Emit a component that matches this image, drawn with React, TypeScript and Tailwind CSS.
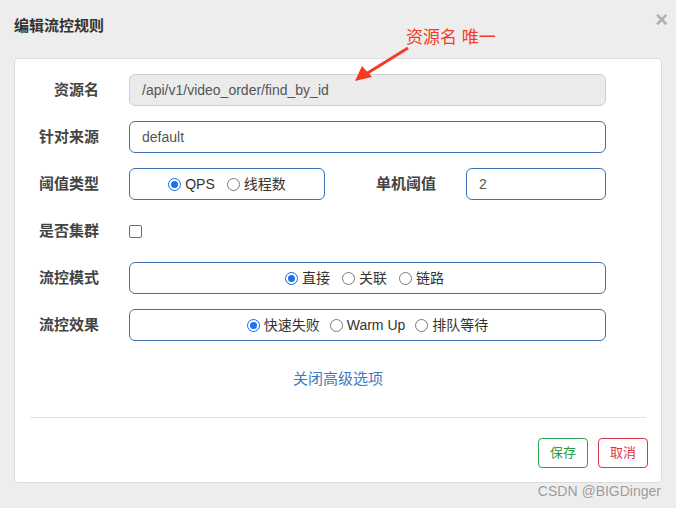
import React from "react";

const font = { fontFamily: '"Liberation Sans", "Noto Sans CJK SC", sans-serif' };

function Radio({ checked, label }: { checked?: boolean; label: string }) {
  return (
    <label className="flex items-center gap-[4px] text-[14px] text-[#333]">
      {checked ? (
        <span className="flex h-[13px] w-[13px] items-center justify-center rounded-full border border-[#1468e5] bg-white p-[2px]">
          <span className="h-full w-full rounded-full bg-[#1a73f0]" />
        </span>
      ) : (
        <span className="h-[13px] w-[13px] rounded-full border border-[#7a7a7a] bg-white" />
      )}
      <span>{label}</span>
    </label>
  );
}

function Row({ label, children }: { label: string; children: React.ReactNode }) {
  return (
    <div className="flex h-[32px] items-center">
      <div className="w-[84px] shrink-0 text-right text-[15px] font-bold text-[#444]">{label}</div>
      <div className="ml-[30px] flex flex-1 items-center">{children}</div>
    </div>
  );
}

export default function App() {
  return (
    <div className="relative h-[508px] w-[676px] overflow-hidden bg-[#ededed]" style={font}>
      <div className="flex h-[58px] items-start justify-between px-[14px] pt-[15px]">
        <h2 className="text-[15px] font-bold text-[#333]">编辑流控规则</h2>
        <span className="mr-[-6px] mt-[-6px] text-[22px] font-bold leading-none text-[#b0b0b0]">×</span>
      </div>

      <div className="mx-[14px] flex h-[425px] flex-col rounded-[4px] border border-[#dcdcdc] bg-white">
        <div className="flex flex-col gap-[15px] pt-[15px] pr-[55px]">
          <Row label="资源名">
            <div className="flex h-[32px] w-full items-center rounded-[6px] border border-[#cfcfcf] bg-[#ebebeb] px-[12px] text-[14px] text-[#555]">
              /api/v1/video_order/find_by_id
            </div>
          </Row>
          <Row label="针对来源">
            <div className="flex h-[32px] w-full items-center rounded-[6px] border border-[#3b73b0] px-[12px] text-[14px] text-[#555]">
              default
            </div>
          </Row>
          <Row label="阈值类型">
            <div className="flex h-[32px] w-[196px] items-center justify-center gap-[12px] rounded-[6px] border border-[#3b73b0]">
              <Radio checked label="QPS" />
              <Radio label="线程数" />
            </div>
            <div className="ml-[51px] text-[15px] font-bold text-[#444]">单机阈值</div>
            <div className="ml-[30px] flex h-[32px] flex-1 items-center rounded-[6px] border border-[#3b73b0] px-[12px] text-[14px] text-[#555]">
              2
            </div>
          </Row>
          <Row label="是否集群">
            <span className="h-[13px] w-[13px] rounded-[2px] border border-[#6b6b6b] bg-white" />
          </Row>
          <Row label="流控模式">
            <div className="flex h-[32px] w-full items-center justify-center gap-[12px] rounded-[6px] border border-[#3b73b0] pr-[6px]">
              <Radio checked label="直接" />
              <Radio label="关联" />
              <Radio label="链路" />
            </div>
          </Row>
          <Row label="流控效果">
            <div className="flex h-[32px] w-full items-center justify-center gap-[10px] rounded-[6px] border border-[#3b73b0]">
              <Radio checked label="快速失败" />
              <Radio label="Warm Up" />
              <Radio label="排队等待" />
            </div>
          </Row>
        </div>

        <div className="mt-[27px] text-center text-[15px] text-[#3a7bc0]">关闭高级选项</div>

        <div className="mx-[15px] mt-[26px] border-t border-[#e2e2e2]" />

        <div className="mt-[20px] flex justify-end gap-[10px] pr-[13px]">
          <button className="h-[30px] w-[50px] rounded-[4px] border border-[#2ea44f] bg-white text-[13px] text-[#2a9d46]">
            保存
          </button>
          <button className="h-[30px] w-[50px] rounded-[4px] border border-[#dc3545] bg-white text-[13px] text-[#dc3545]">
            取消
          </button>
        </div>
      </div>

      <div className="absolute left-[406px] top-[25px] text-[17px] text-[#f53b24]">资源名 唯一</div>
      <svg className="absolute left-0 top-0" width="676" height="508" viewBox="0 0 676 508">
        <line x1="408" y1="48" x2="366" y2="74" stroke="#f53b24" strokeWidth="3" />
        <polygon points="355,81 362,66 372,77" fill="#f53b24" />
      </svg>

      <div
        className="absolute right-[15px] top-[481px] text-[14px] text-[#9a9a9a]"
        style={{ textShadow: "0 0 1px #fff" }}
      >
        CSDN @BIGDinger
      </div>
    </div>
  );
}
